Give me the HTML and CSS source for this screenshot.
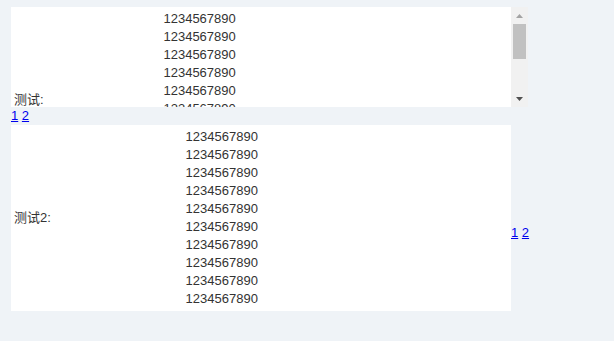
FILE: index.html
```html
<!DOCTYPE html>
<html lang="zh">
<head>
  <meta charset="UTF-8" />
  <title>测试</title>
  <link rel="stylesheet" href="styles.css">
</head>
<body>
  <div class="scroller">
    <div class="viewport">
      <table class="grid">
        <tr>
          <td class="label">测试:</td>
          <td class="nums">1234567890<br>1234567890<br>1234567890<br>1234567890<br>1234567890<br>1234567890<br>1234567890<br>1234567890<br>1234567890<br>1234567890</td>
        </tr>
      </table>
    </div>
    <div class="scrollbar">
      <div class="sb-btn">
        <svg width="7" height="4" viewBox="0 0 7 4"><path d="M3.5 0L7 4H0z" fill="#a3a3a3"/></svg>
      </div>
      <div class="sb-track"><div class="sb-thumb"></div></div>
      <div class="sb-btn">
        <svg width="7" height="4" viewBox="0 0 7 4"><path d="M0 0H7L3.5 4z" fill="#505050"/></svg>
      </div>
    </div>
  </div>
  <div class="pager"><a href="#">1</a> <a href="#">2</a></div>

  <div class="row">
    <table class="grid">
      <tr>
        <td class="label">测试2:</td>
        <td class="nums">1234567890<br>1234567890<br>1234567890<br>1234567890<br>1234567890<br>1234567890<br>1234567890<br>1234567890<br>1234567890<br>1234567890</td>
      </tr>
    </table>
    <div class="pager side"><a href="#">1</a> <a href="#">2</a></div>
  </div>
</body>
</html>
```

FILE: styles.css
```css
body {
  margin: 0;
  padding: 7px 11px;
  background: #eff3f7;
  color: #333;
  font-family: "Liberation Sans", Arial, "Noto Sans CJK SC", sans-serif;
  font-size: 13px;
  line-height: 18px;
}

/* scroll box with a drawn scrollbar */
.scroller {
  display: flex;
  width: 517px;
  height: 100px;
}

.viewport {
  width: 500px;
  height: 100px;
  overflow: hidden;
  background: #fff;
}

.scrollbar {
  display: flex;
  flex-direction: column;
  width: 17px;
  background: #f1f1f1;
}

.sb-btn {
  display: flex;
  align-items: center;
  justify-content: center;
  height: 17px;
}

.sb-btn svg {
  display: block;
}

.sb-track {
  flex: 1;
  padding: 0 2px;
}

.sb-thumb {
  height: 35px;
  background: #c1c1c1;
}

.grid {
  width: 500px;
  background: #fff;
  border-spacing: 2px;
  font-size: 13px;
}

.grid td {
  padding: 1px;
  line-height: 18px;
}

.pager a {
  color: #0000ee;
}

.row {
  display: flex;
  align-items: center;
}

.pager.side {
  margin-top: 30px;
}
```
